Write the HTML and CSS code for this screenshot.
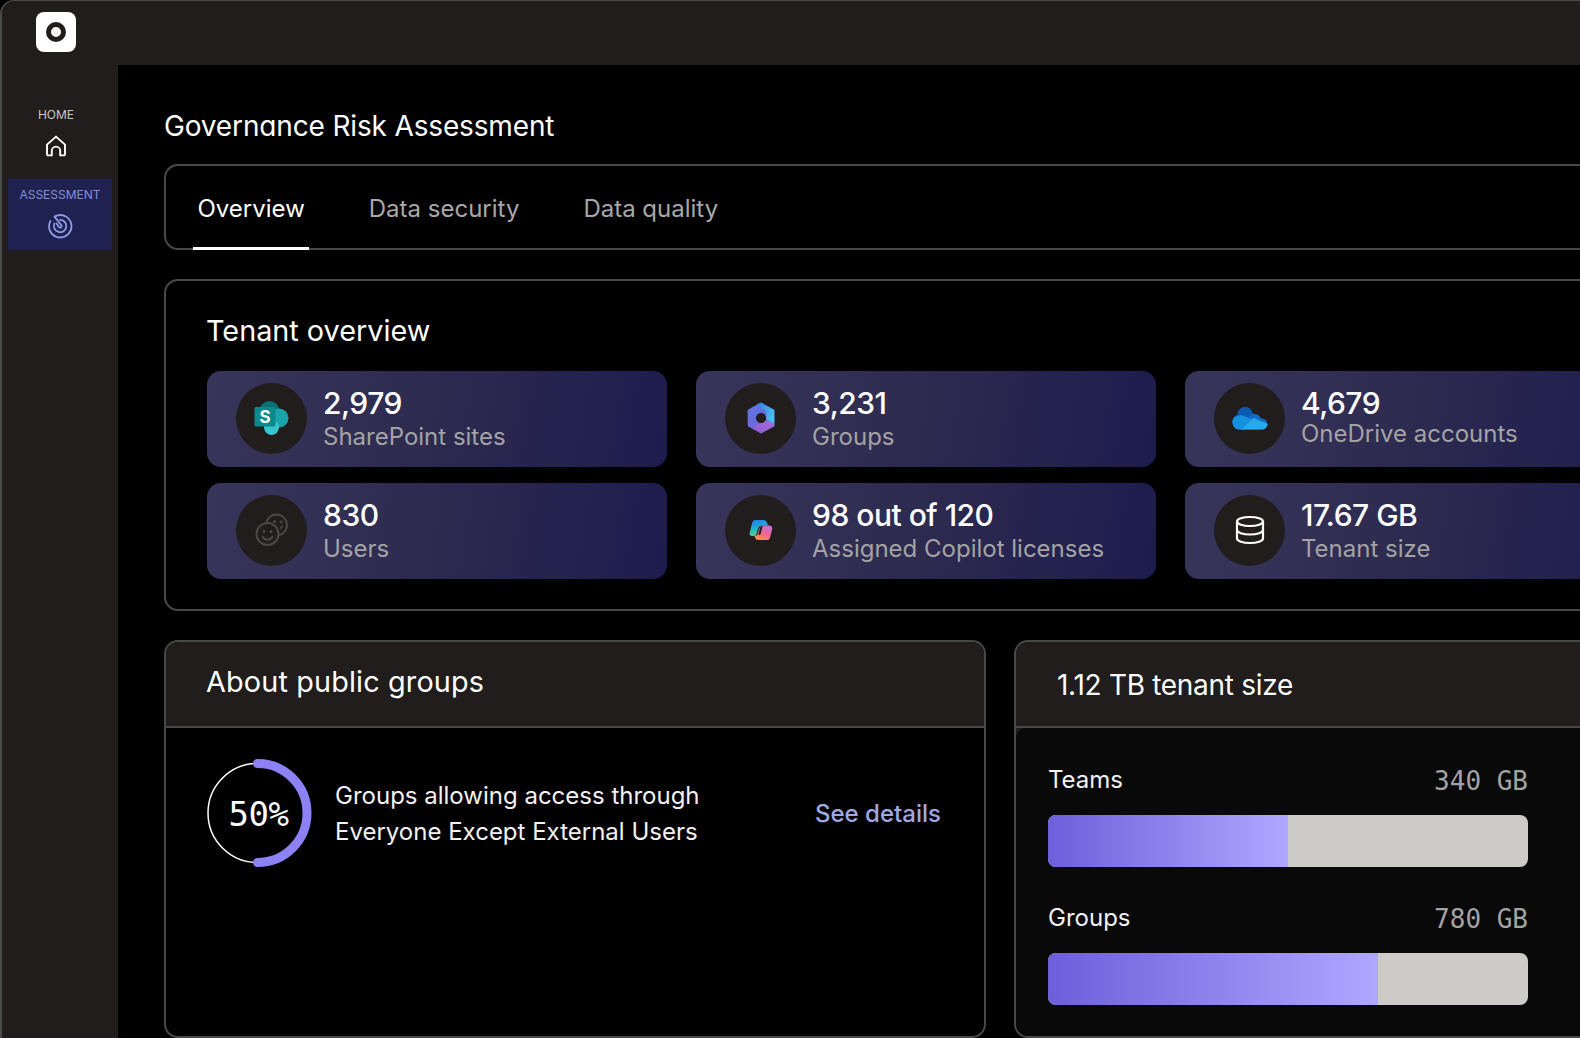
FILE: index.html
```html
<!DOCTYPE html>
<html lang="en">
<head>
  <meta charset="UTF-8">
  <title>Governance Risk Assessment</title>
  <link rel="stylesheet" href="styles.css">
</head>
<body>
  <svg class="defs" width="0" height="0" aria-hidden="true">
    <defs>
      <linearGradient id="grad-groups-a" x1="0" y1="0" x2="0.6" y2="1">
        <stop offset="0" stop-color="#5a78e6"/>
        <stop offset="1" stop-color="#7a5fd8"/>
      </linearGradient>
      <linearGradient id="grad-groups-b" x1="0" y1="0" x2="1" y2="0.6">
        <stop offset="0" stop-color="#2f7fe0"/>
        <stop offset="1" stop-color="#4cc0f2"/>
      </linearGradient>
      <linearGradient id="grad-groups-c" x1="0" y1="1" x2="1" y2="0">
        <stop offset="0" stop-color="#8a5bd0"/>
        <stop offset="1" stop-color="#a56fd8"/>
      </linearGradient>
      <linearGradient id="grad-copilot-a" x1="0.2" y1="0" x2="0.5" y2="1">
        <stop offset="0" stop-color="#1f7fee"/>
        <stop offset="0.55" stop-color="#1fb6c8"/>
        <stop offset="1" stop-color="#6ed06a"/>
      </linearGradient>
      <linearGradient id="grad-copilot-b" x1="0.8" y1="0" x2="0.3" y2="1">
        <stop offset="0" stop-color="#c46be0"/>
        <stop offset="0.55" stop-color="#f0688f"/>
        <stop offset="1" stop-color="#fb8f4a"/>
      </linearGradient>
      <clipPath id="clip-cloud">
        <path d="M7 23.500h23c3 0 5.500-2.500 5.500-5.500s-2.500-5.500-5.500-5.500h-1c-1-2.500-3.500-4.500-6.500-4.500-.5 0-1 0-1.500.2C19.500 3.500 16.500 1 13.500 1 9 1 5.800 4.500 5.500 9 2.800 9.500.5 12.500.5 16c0 4 2.800 7.500 6.500 7.500z"/>
      </clipPath>
    </defs>
  </svg>

  <div class="app">
    <header class="topbar">
      <div class="logo"><span class="logo-dot"></span></div>
    </header>

    <div class="shell">
      <nav class="sidebar">
        <a class="nav-item">
          <span>HOME</span>
          <svg width="24" height="24" viewBox="0 0 24 24" fill="none" stroke="#fff" stroke-width="1.9" stroke-linejoin="round" stroke-linecap="round">
            <path d="M3 10.600 12 2.600l9 8v9.200a1.600 1.600 0 0 1-1.600 1.600h-3.200v-4.600a4.200 4.200 0 0 0-8.400 0v4.600H4.600A1.600 1.600 0 0 1 3 19.800z"/>
          </svg>
        </a>
        <a class="nav-item nav-item-active">
          <span>ASSESSMENT</span>
          <svg width="26" height="26" viewBox="0 0 26 26" fill="none" stroke="#8e9ae6" stroke-width="1.800" stroke-linecap="round">
            <path d="M8 3.400A11.200 11.200 0 1 1 3.400 8"/>
            <path d="M7.400 10.500A6.200 6.200 0 1 0 13 6.800"/>
            <path d="M7.500 3.600 14.400 12.200a1.500 1.500 0 0 1-2.300 1.900L9.500 10.500"/>
          </svg>
        </a>
      </nav>

      <main class="main">
        <div class="content">
          <h1 class="page-title">Governance Risk Assessment</h1>

          <div class="tabs">
            <a class="tab tab-active">Overview</a>
            <a class="tab">Data security</a>
            <a class="tab">Data quality</a>
          </div>

          <section class="panel tenant">
            <h2 class="tenant-title">Tenant overview</h2>
            <div class="stats">
              <div class="stat">
                <div class="stat-icon">
                  <svg width="38" height="38" viewBox="0 0 38 38">
                    <circle cx="16.500" cy="12" r="10" fill="#0a6e72"/>
                    <circle cx="26" cy="19" r="9.500" fill="#1ba3ab"/>
                    <circle cx="18.500" cy="28.500" r="7.500" fill="#38c6cd"/>
                    <rect x="1.500" y="8" width="21" height="19.500" rx="1.500" fill="#0b8a8e"/>
                    <text x="12" y="24" class="sp-letter">S</text>
                  </svg>
                </div>
                <div class="stat-text">
                  <div class="stat-value">2,979</div>
                  <div class="stat-label">SharePoint sites</div>
                </div>
              </div>

              <div class="stat">
                <div class="stat-icon">
                  <svg width="32" height="32" viewBox="0 0 30 30">
                    <path d="M15 1.500 26.500 8v14L15 28.500 3.500 22V8z" fill="url(#grad-groups-a)" stroke="url(#grad-groups-a)" stroke-width="2" stroke-linejoin="round"/>
                    <path d="M11 2 15 .8l12.500 6.700v13L20 16.500V11c0-2.500-2-4-4-5z" fill="url(#grad-groups-b)"/>
                    <path d="M7 24 20 17l7.500 3.500v2L15 29.300z" fill="url(#grad-groups-c)"/>
                    <circle cx="15" cy="15" r="4.800" fill="#201d1c"/>
                  </svg>
                </div>
                <div class="stat-text">
                  <div class="stat-value">3,231</div>
                  <div class="stat-label">Groups</div>
                </div>
              </div>

              <div class="stat">
                <div class="stat-icon">
                  <svg width="36" height="24" viewBox="0 0 36 24">
                    <g clip-path="url(#clip-cloud)">
                      <rect width="36" height="24" fill="#0f6cc8"/>
                      <path d="M6 0h16l-1 8-6 4-9-3z" fill="#0a5bb0"/>
                      <path d="M0 24V12l9-3 13 5-11 10z" fill="#1490df"/>
                      <path d="M9 24 21.500 12 36 18v6z" fill="#29a8ea"/>
                    </g>
                  </svg>
                </div>
                <div class="stat-text stat-text-tight">
                  <div class="stat-value">4,679</div>
                  <div class="stat-label">OneDrive accounts</div>
                </div>
              </div>

              <div class="stat">
                <div class="stat-icon">
                  <svg width="36" height="36" viewBox="0 0 36 36" fill="none" stroke="#4b4947" stroke-width="1.900" stroke-linecap="round">
                    <circle cx="22.500" cy="13" r="10.500"/>
                    <circle cx="13.500" cy="22" r="11" fill="#201d1c"/>
                    <circle cx="10" cy="19.500" r="0.600" fill="#4b4947"/>
                    <circle cx="17" cy="19.500" r="0.600" fill="#4b4947"/>
                    <path d="M8.500 24.500a5.500 5.500 0 0 0 10 0"/>
                    <circle cx="20.500" cy="9.500" r="0.600" fill="#4b4947"/>
                    <circle cx="27" cy="10" r="0.600" fill="#4b4947"/>
                    <path d="M27 16a4 4 0 0 0 1-1.500"/>
                  </svg>
                </div>
                <div class="stat-text">
                  <div class="stat-value">830</div>
                  <div class="stat-label">Users</div>
                </div>
              </div>

              <div class="stat">
                <div class="stat-icon">
                  <svg width="24" height="22" viewBox="0 0 24 22">
                    <path d="M6 1h8.500c2 0 3 1 3.500 2.500l1 3H13c-2.500 0-3.500 1.500-4 3L7.500 15c-.4 1.500-1.200 2-2.500 2H3C1 17 .2 15.500.7 13.500L3 4.500C3.500 2.300 4.500 1 6 1z" fill="url(#grad-copilot-a)"/>
                    <path d="M18 21H9.500c-2 0-3-1-3.500-2.500L5.500 17c1.500 0 2.500-.5 3-2L10.500 9c.5-1.500 1.500-2.500 3.500-2.500h6c2.500 0 3.500 1.500 3.200 3.500l-2 8c-.5 2-1.200 3-2.700 3z" fill="url(#grad-copilot-b)"/>
                    <path d="M12.500 8 10.500 15" stroke="#201d1c" stroke-width="2" stroke-linecap="round"/>
                  </svg>
                </div>
                <div class="stat-text">
                  <div class="stat-value">98 out of 120</div>
                  <div class="stat-label">Assigned Copilot licenses</div>
                </div>
              </div>

              <div class="stat">
                <div class="stat-icon">
                  <svg width="32" height="32" viewBox="0 0 32 32" fill="none" stroke="#fff" stroke-width="2.200">
                    <ellipse cx="16" cy="7.500" rx="13" ry="4.500"/>
                    <path d="M3 7.500v17c0 2.500 5.800 4.500 13 4.500s13-2 13-4.500v-17"/>
                    <path d="M3 16c0 2.500 5.800 4.500 13 4.500s13-2 13-4.500"/>
                  </svg>
                </div>
                <div class="stat-text">
                  <div class="stat-value">17.67 GB</div>
                  <div class="stat-label">Tenant size</div>
                </div>
              </div>
            </div>
          </section>

          <div class="lower">
            <section class="panel card">
              <div class="card-head">
                <h2 class="card-title">About public groups</h2>
              </div>
              <div class="public-body">
                <div class="ring">
                  <svg width="106" height="110" viewBox="0 0 106 110" fill="none">
                    <circle cx="50.500" cy="55" r="49.500" stroke="#fff" stroke-width="1.500"/>
                    <path d="M50.500 5.500a49.500 49.500 0 0 1 0 99" stroke="#8c82f5" stroke-width="9" stroke-linecap="round"/>
                  </svg>
                  <span class="ring-value">50%</span>
                </div>
                <p class="public-text">Groups allowing access through<br>Everyone Except External Users</p>
                <a class="details-link">See details</a>
              </div>
            </section>

            <section class="panel card card-size">
              <div class="card-head">
                <h2 class="card-title card-title-size">1.12 TB tenant size</h2>
              </div>
              <div class="size-body">
                <div class="size-row">
                  <div class="size-label">
                    <span>Teams</span>
                    <span class="size-amount">340 GB</span>
                  </div>
                  <div class="bar"><div class="bar-fill" style="width: 50%"></div></div>
                </div>
                <div class="size-row">
                  <div class="size-label">
                    <span>Groups</span>
                    <span class="size-amount">780 GB</span>
                  </div>
                  <div class="bar"><div class="bar-fill" style="width: 68.800%"></div></div>
                </div>
              </div>
            </section>
          </div>
        </div>
      </main>
    </div>
  </div>
</body>
</html>
```

FILE: styles.css
```css
* {
  box-sizing: border-box;
}

html,
body {
  margin: 0;
  height: 100%;
  background: #000;
  overflow: hidden;
}

body {
  font-family: Inter, "Liberation Sans", sans-serif;
  color: #fff;
}

h1,
h2,
p {
  margin: 0;
  font-weight: 400;
}

.defs {
  position: absolute;
}

.app {
  width: 1580px;
  height: 1038px;
  display: flex;
  flex-direction: column;
  background: #201d1c;
  border-top: 1px solid #4a4a4a;
  border-left: 2px solid #4a4a4a;
  border-top-left-radius: 14px;
  overflow: hidden;
}

.topbar {
  height: 64px;
  flex: none;
  padding: 11px 0 0 34px;
}

.logo {
  width: 40px;
  height: 40px;
  background: #fff;
  border-radius: 8px;
  display: flex;
  align-items: center;
  justify-content: center;
}

.logo-dot {
  width: 20px;
  height: 20px;
  border: 5.500px solid #201d1c;
  border-radius: 50%;
}

.shell {
  flex: 1;
  display: flex;
  min-height: 0;
}

.sidebar {
  width: 116px;
  flex: none;
  padding: 42px 6px 0;
  display: flex;
  flex-direction: column;
  gap: 21px;
}

.nav-item {
  display: flex;
  flex-direction: column;
  align-items: center;
  gap: 11px;
  padding-right: 8px;
  font-size: 12px;
  line-height: 16px;
  color: #c9c9c9;
}

.nav-item-active {
  height: 71px;
  padding: 8px 0 0;
  gap: 10px;
  background: #1f2150;
  color: #868fd6;
}

.main {
  flex: 1;
  min-width: 0;
  background: #000;
  overflow: hidden;
}

.content {
  width: 1540px;
  padding: 44px 0 0 46px;
}

.page-title {
  font-size: 28px;
  line-height: 34px;
  letter-spacing: -0.15px;
  font-feature-settings: "cv11";
  margin-bottom: 21px;
}

.tabs {
  height: 86px;
  display: flex;
  gap: 55px;
  padding-left: 27px;
  border: 2px solid #484848;
  border-right: 0;
  border-radius: 14px 0 0 14px;
}

.tab {
  display: flex;
  align-items: center;
  padding: 0 4.500px;
  font-size: 24px;
  color: #a8a8a8;
  margin-bottom: -2px;
}

.tab-active {
  padding-top: 3px;
  color: #fff;
  border-bottom: 3px solid #fff;
}

.panel {
  border: 2px solid #484848;
  background: #000;
}

.tenant {
  margin-top: 29px;
  height: 332px;
  padding: 33px 0 0 41px;
  border-right: 0;
  border-radius: 14px 0 0 14px;
}

.tenant-title {
  font-size: 28.800px;
  line-height: 34px;
  margin: 0 0 23px -1px;
}

.stats {
  display: grid;
  grid-template-columns: repeat(3, 460px);
  grid-auto-rows: 96px;
  column-gap: 29px;
  row-gap: 16px;
}

.stat {
  display: flex;
  align-items: center;
  gap: 16px;
  padding-left: 29px;
  border-radius: 14px;
  background: linear-gradient(100deg, #39355a, #2d2a50 50%, #1d1c4e);
}

.stat-icon {
  width: 71px;
  height: 71px;
  flex: none;
  margin-bottom: 2px;
  border-radius: 50%;
  background: #201d1c;
  display: flex;
  align-items: center;
  justify-content: center;
}

.stat-text {
  padding-bottom: 1.500px;
}

.stat-value {
  font-size: 30px;
  line-height: 36px;
  font-weight: 500;
  letter-spacing: -0.5px;
  margin-bottom: 1.500px;
}

.stat-label {
  font-size: 24px;
  line-height: 30px;
  color: #a3a3a3;
}

.stat-text-tight {
  padding-bottom: 4px;
}

.stat-text-tight .stat-label {
  margin-top: -3px;
}

.sp-letter {
  font-family: Inter, sans-serif;
  font-size: 17px;
  font-weight: 700;
  fill: #fff;
  text-anchor: middle;
}

.lower {
  margin-top: 29px;
  display: grid;
  grid-template-columns: 822px 1fr;
  column-gap: 28px;
}

.card {
  height: 398px;
  border-radius: 14px;
  overflow: hidden;
}

.card-size {
  border-right: 0;
  border-radius: 14px 0 0 14px;
  background: #201d1c;
}

.card-head {
  height: 86px;
  display: flex;
  align-items: center;
  padding: 0 41px;
  background: #201d1c;
  border-bottom: 2px solid #484848;
}

.card-title {
  font-size: 28.800px;
  line-height: 34px;
  letter-spacing: 0.15px;
  margin: 0 0 5px -1px;
}

.card-title-size {
  font-size: 28px;
  letter-spacing: -0.3px;
  margin: 2px 0 0;
}

.public-body {
  display: flex;
  align-items: flex-start;
  padding: 30px 0 0 41px;
}

.ring {
  position: relative;
  width: 106px;
  height: 110px;
  flex: none;
}

.ring-value {
  position: absolute;
  inset: 0;
  display: flex;
  align-items: center;
  justify-content: center;
  padding: 2px 3px 0 0;
  font-family: "DejaVu Sans Mono", monospace;
  font-size: 34px;
  letter-spacing: -0.5px;
}

.public-text {
  margin: 20px 0 0 22px;
  width: 480px;
  font-size: 24px;
  line-height: 36px;
  color: #f2f2f2;
}

.details-link {
  margin-top: 38px;
  font-size: 24px;
  line-height: 36px;
  font-weight: 500;
  color: #a0a8e4;
}

.size-body {
  height: 100%;
  padding: 33px 0 0 32px;
  background: #090909;
  border-top-left-radius: 10px;
}

.size-row {
  width: 480px;
  margin-bottom: 32px;
}

.size-label {
  display: flex;
  justify-content: space-between;
  align-items: center;
  height: 36px;
  margin-bottom: 18px;
  font-size: 24px;
  color: #f2f2f2;
}

.size-amount {
  margin-top: 4px;
  font-family: "DejaVu Sans Mono", monospace;
  font-size: 26px;
  color: #a3a3a3;
}

.bar {
  height: 52px;
  border-radius: 8px;
  background: #cccbc8;
  overflow: hidden;
}

.bar-fill {
  height: 100%;
  background: linear-gradient(90deg, #6c5fdb, #b0a7ff);
}
```
